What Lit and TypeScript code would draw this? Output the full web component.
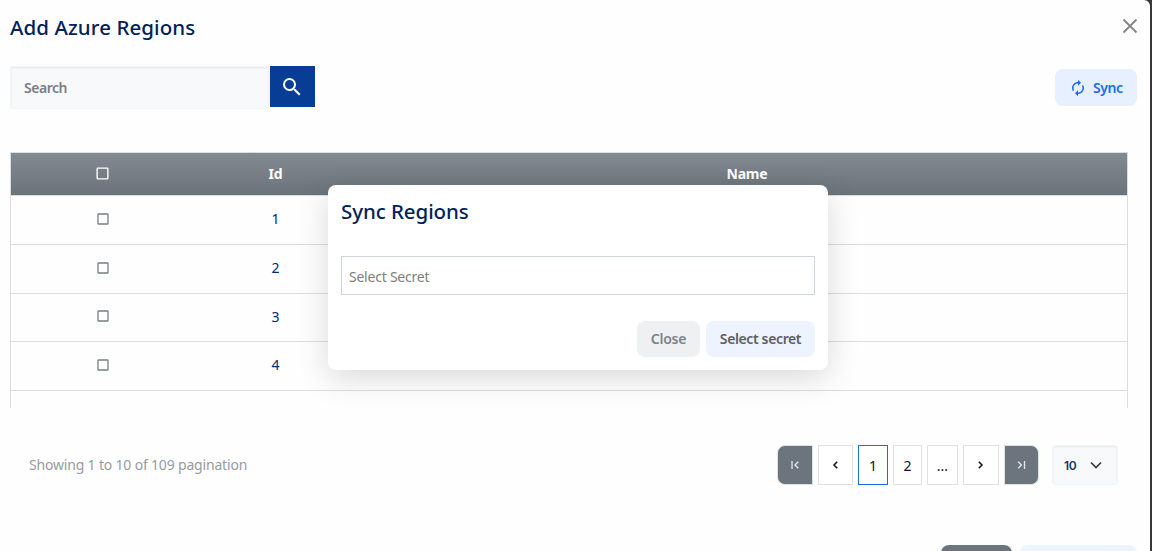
import { LitElement, html, css, svg } from "lit";
import { customElement, state } from "lit/decorators.js";

const checkbox = html`<svg class="box" viewBox="0 0 14 14"><rect x="2" y="2" width="10" height="10" rx="0.6" /></svg>`;

const paths = {
  first: svg`<path d="M3 2v8M9.300 2.700 6 6l3.300 3.300" />`,
  prev: svg`<path d="M7.200 2.700 4 6l3.200 3.300" />`,
  next: svg`<path d="M3.800 2.700 7 6 3.800 9.300" />`,
  last: svg`<path d="M2.200 2.700 5.500 6 2.200 9.300M8.500 2v8" />`,
};

@customElement("app-root")
export class AppRoot extends LitElement {
  static styles = css`
    :host {
      display: block;
      height: 551px;
      overflow: hidden;
      background: #37383a;
      font-family: "Noto Sans", sans-serif;
      font-size: 14px;
      color: #012970;
    }
    * { box-sizing: border-box; }
    .panel {
      position: relative;
      width: 1150px;
      height: 551px;
      overflow: hidden;
      background: #fefefe;
      border-top-right-radius: 6px;
      padding: 0 10px;
      display: flex;
      flex-direction: column;
    }
    .head {
      height: 66px;
      padding: 13px 2px 0 0;
      display: flex;
      justify-content: space-between;
      align-items: flex-start;
      flex: none;
    }
    h1, h2 {
      margin: 0 0 2px;
      font-size: 20.500px;
      font-weight: 500;
      line-height: 28px;
      color: #012259;
      white-space: nowrap;
    }
    h1 { letter-spacing: 0.08px; }
    h2 { letter-spacing: -0.08px; }
    .x { width: 16px; height: 16px; margin-top: 5px; stroke: #858585; stroke-width: 1.800; fill: none; }
    .tools {
      height: 86px;
      flex: none;
      display: flex;
      justify-content: space-between;
      align-items: flex-start;
      padding-right: 3px;
    }
    .search { display: flex; align-items: flex-start; }
    .field {
      width: 260px;
      height: 43px;
      border: 1px solid #f3f5f7;
      box-shadow: inset 0 1px 2px #e4e6e9;
      background: #f8f9fb;
      padding: 0 13px;
      line-height: 42px;
      font-weight: 600;
      letter-spacing: -0.48px;
      color: #787f86;
    }
    .go {
      width: 45px;
      height: 41px;
      background: #073d94;
      display: grid;
      place-items: center;
      padding-right: 1px;
    }
    .go svg { width: 24px; height: 24px; fill: #fff; }
    .sync {
      margin-top: 3px;
      width: 82px;
      height: 37px;
      border-radius: 8px;
      background: #e6f0ff;
      color: #1b6cf4;
      font-weight: 600;
      letter-spacing: -0.4px;
      display: flex;
      align-items: center;
      padding-left: 14px;
      gap: 6px;
    }
    .sync svg { width: 18px; height: 18px; fill: #1b6cf4; flex: none; }
    .table {
      flex: none;
      width: 1118px;
      height: 256px;
      overflow: hidden;
      border: 1px solid #dcdddf;
      border-bottom: 0;
      display: grid;
      grid-template-rows: 43px 49px 49px 48px 49px 49px;
    }
    .row {
      display: grid;
      grid-template-columns: 184px 161px 1fr;
      align-items: center;
      justify-items: center;
      border-bottom: 1px solid #dcdddf;
      padding-bottom: 3px;
    }
    .row.th {
      background: linear-gradient(#838a90, #6a727b);
      color: #fff;
      font-weight: 700;
      letter-spacing: -0.2px;
      padding-bottom: 1px;
    }
    .row.th span:last-child { padding-left: 11px; }
    .box { width: 14px; height: 14px; fill: none; stroke: #777e86; stroke-width: 1.300; display: block; }
    .th .box { stroke: #fff; width: 15px; height: 15px; margin-right: 1px; }
    .foot {
      flex: none;
      height: 40px;
      margin-top: 37px;
      padding: 0 22px 0 19px;
      display: flex;
      align-items: center;
    }
    .info { color: #979ca1; margin-right: auto; white-space: nowrap; letter-spacing: -0.18px; padding-bottom: 1px; }
    .pages { display: flex; gap: 5px; height: 40px; color: #111; }
    .pg {
      border: 1px solid #dfe1e4;
      display: grid;
      place-items: center;
      width: 35px;
      background: #fff;
    }
    .pg svg { width: 12px; height: 12px; fill: none; stroke: #111; stroke-width: 1.500; }
    .pg.first, .pg.last { background: #6c757d; }
    .pg.first svg, .pg.last svg { stroke: #e6e8ea; stroke-width: 1.300; }
    .pg.first { border-radius: 8px 0 0 8px; width: 36px; }
    .pg.last { border-radius: 0 8px 8px 0; }
    .pg.on { width: 30px; border-color: #1b6ce0; }
    .pg.two { width: 29px; }
    .pg.dots { width: 31px; }
    .pg.next { width: 36px; }
    .size {
      margin-left: 13px;
      width: 66px;
      height: 40px;
      border: 1px solid #f3f4f6;
      border-radius: 4px;
      background: #f8f9fb;
      box-shadow: inset 0 1px 2px #e6e8ea;
      display: flex;
      align-items: center;
      justify-content: space-between;
      padding: 0 14px 0 11px;
      font: 600 12px Inter, sans-serif;
      letter-spacing: -0.3px;
      color: #1c3664;
    }
    .size svg { width: 14px; height: 14px; fill: none; stroke: #343a40; stroke-width: 1.700; }
    .actions {
      flex: none;
      margin-top: 60px;
      padding-right: 3px;
      display: flex;
      justify-content: flex-end;
      gap: 8px;
    }
    .actions i { height: 37px; border-radius: 8px; }
    .actions .a { width: 71px; background: #6c757d; }
    .actions .b { width: 117px; background: #ecf4ff; }
    .modal {
      position: absolute;
      left: 328px;
      top: 185px;
      width: 500px;
      height: 185px;
      border-radius: 8px;
      background: #fff;
      box-shadow: 0 8px 32px rgba(0, 0, 0, 0.15);
      padding: 12px 13px 13px;
      display: flex;
      flex-direction: column;
    }
    .secret {
      margin-top: 29px;
      height: 39px;
      flex: none;
      border: 1px solid #ced4da;
      padding: 1px 7px 0;
      line-height: 38px;
      letter-spacing: -0.23px;
      color: #808080;
    }
    .btns { margin-top: 26px; display: flex; justify-content: flex-end; gap: 6px; }
    .btn {
      height: 36px;
      border-radius: 8px;
      display: grid;
      place-items: center;
      font-weight: 600;
      letter-spacing: -0.37px;
      padding-bottom: 1px;
    }
    .close { width: 63px; background: #eff0f1; color: #7d8389; letter-spacing: -0.2px; }
    .pick { width: 109px; background: #edf4ff; color: #5c6064; }
  `;

  @state() private ids = [1, 2, 3, 4];

  private page(cls: string, content: unknown) {
    return html`<div class="pg ${cls}">${content}</div>`;
  }

  private arrow(name: keyof typeof paths) {
    return this.page(name, html`<svg viewBox="0 0 12 12">${paths[name]}</svg>`);
  }

  render() {
    return html`
      <div class="panel">
        <div class="head">
          <h1>Add Azure Regions</h1>
          <svg class="x" viewBox="0 0 16 16"><path d="M1.500 1.500l13 13M14.500 1.500l-13 13" /></svg>
        </div>
        <div class="tools">
          <div class="search">
            <div class="field"><span>Search</span></div>
            <div class="go"><svg viewBox="0 0 24 24"><path d="M15.500 14h-.79l-.28-.27A6.471 6.471 0 0 0 16 9.500 6.500 6.500 0 1 0 9.500 16c1.610 0 3.090-.59 4.230-1.570l.27.28v.79l5 4.990L20.490 19l-4.990-5zm-6 0C7.010 14 5 11.990 5 9.500S7.010 5 9.500 5 14 7.010 14 9.500 11.990 14 9.500 14z" /></svg></div>
          </div>
          <div class="sync">
            <svg viewBox="0 0 24 24"><path d="M12 6v3l4-4-4-4v3c-4.420 0-8 3.580-8 8 0 1.570.46 3.030 1.240 4.260L6.700 14.800A5.870 5.870 0 0 1 6 12c0-3.310 2.690-6 6-6zm6.760 1.740L17.300 9.200c.44.84.7 1.790.7 2.800 0 3.310-2.690 6-6 6v-3l-4 4 4 4v-3c4.420 0 8-3.580 8-8 0-1.570-.46-3.030-1.240-4.260z" /></svg>
            <span>Sync</span>
          </div>
        </div>
        <div class="table">
          <div class="row th">${checkbox}<span>Id</span><span>Name</span></div>
          ${this.ids.map((id) => html`<div class="row">${checkbox}<span>${id}</span></div>`)}
          <div class="row"></div>
        </div>
        <div class="foot">
          <span class="info">Showing 1 to 10 of 109 pagination</span>
          <div class="pages">
            ${this.arrow("first")}${this.arrow("prev")}
            ${this.page("on", html`<span>1</span>`)}
            ${this.page("two", html`<span>2</span>`)}
            ${this.page("dots", html`<span>...</span>`)}
            ${this.arrow("next")}${this.arrow("last")}
          </div>
          <div class="size"><span>10</span><svg viewBox="0 0 14 14"><path d="M2 4.500l5 5 5-5" /></svg></div>
        </div>
        <div class="actions"><i class="a"></i><i class="b"></i></div>
        <div class="modal">
          <h2>Sync Regions</h2>
          <div class="secret"><span>Select Secret</span></div>
          <div class="btns">
            <div class="btn close"><span>Close</span></div>
            <div class="btn pick"><span>Select secret</span></div>
          </div>
        </div>
      </div>
    `;
  }
}
